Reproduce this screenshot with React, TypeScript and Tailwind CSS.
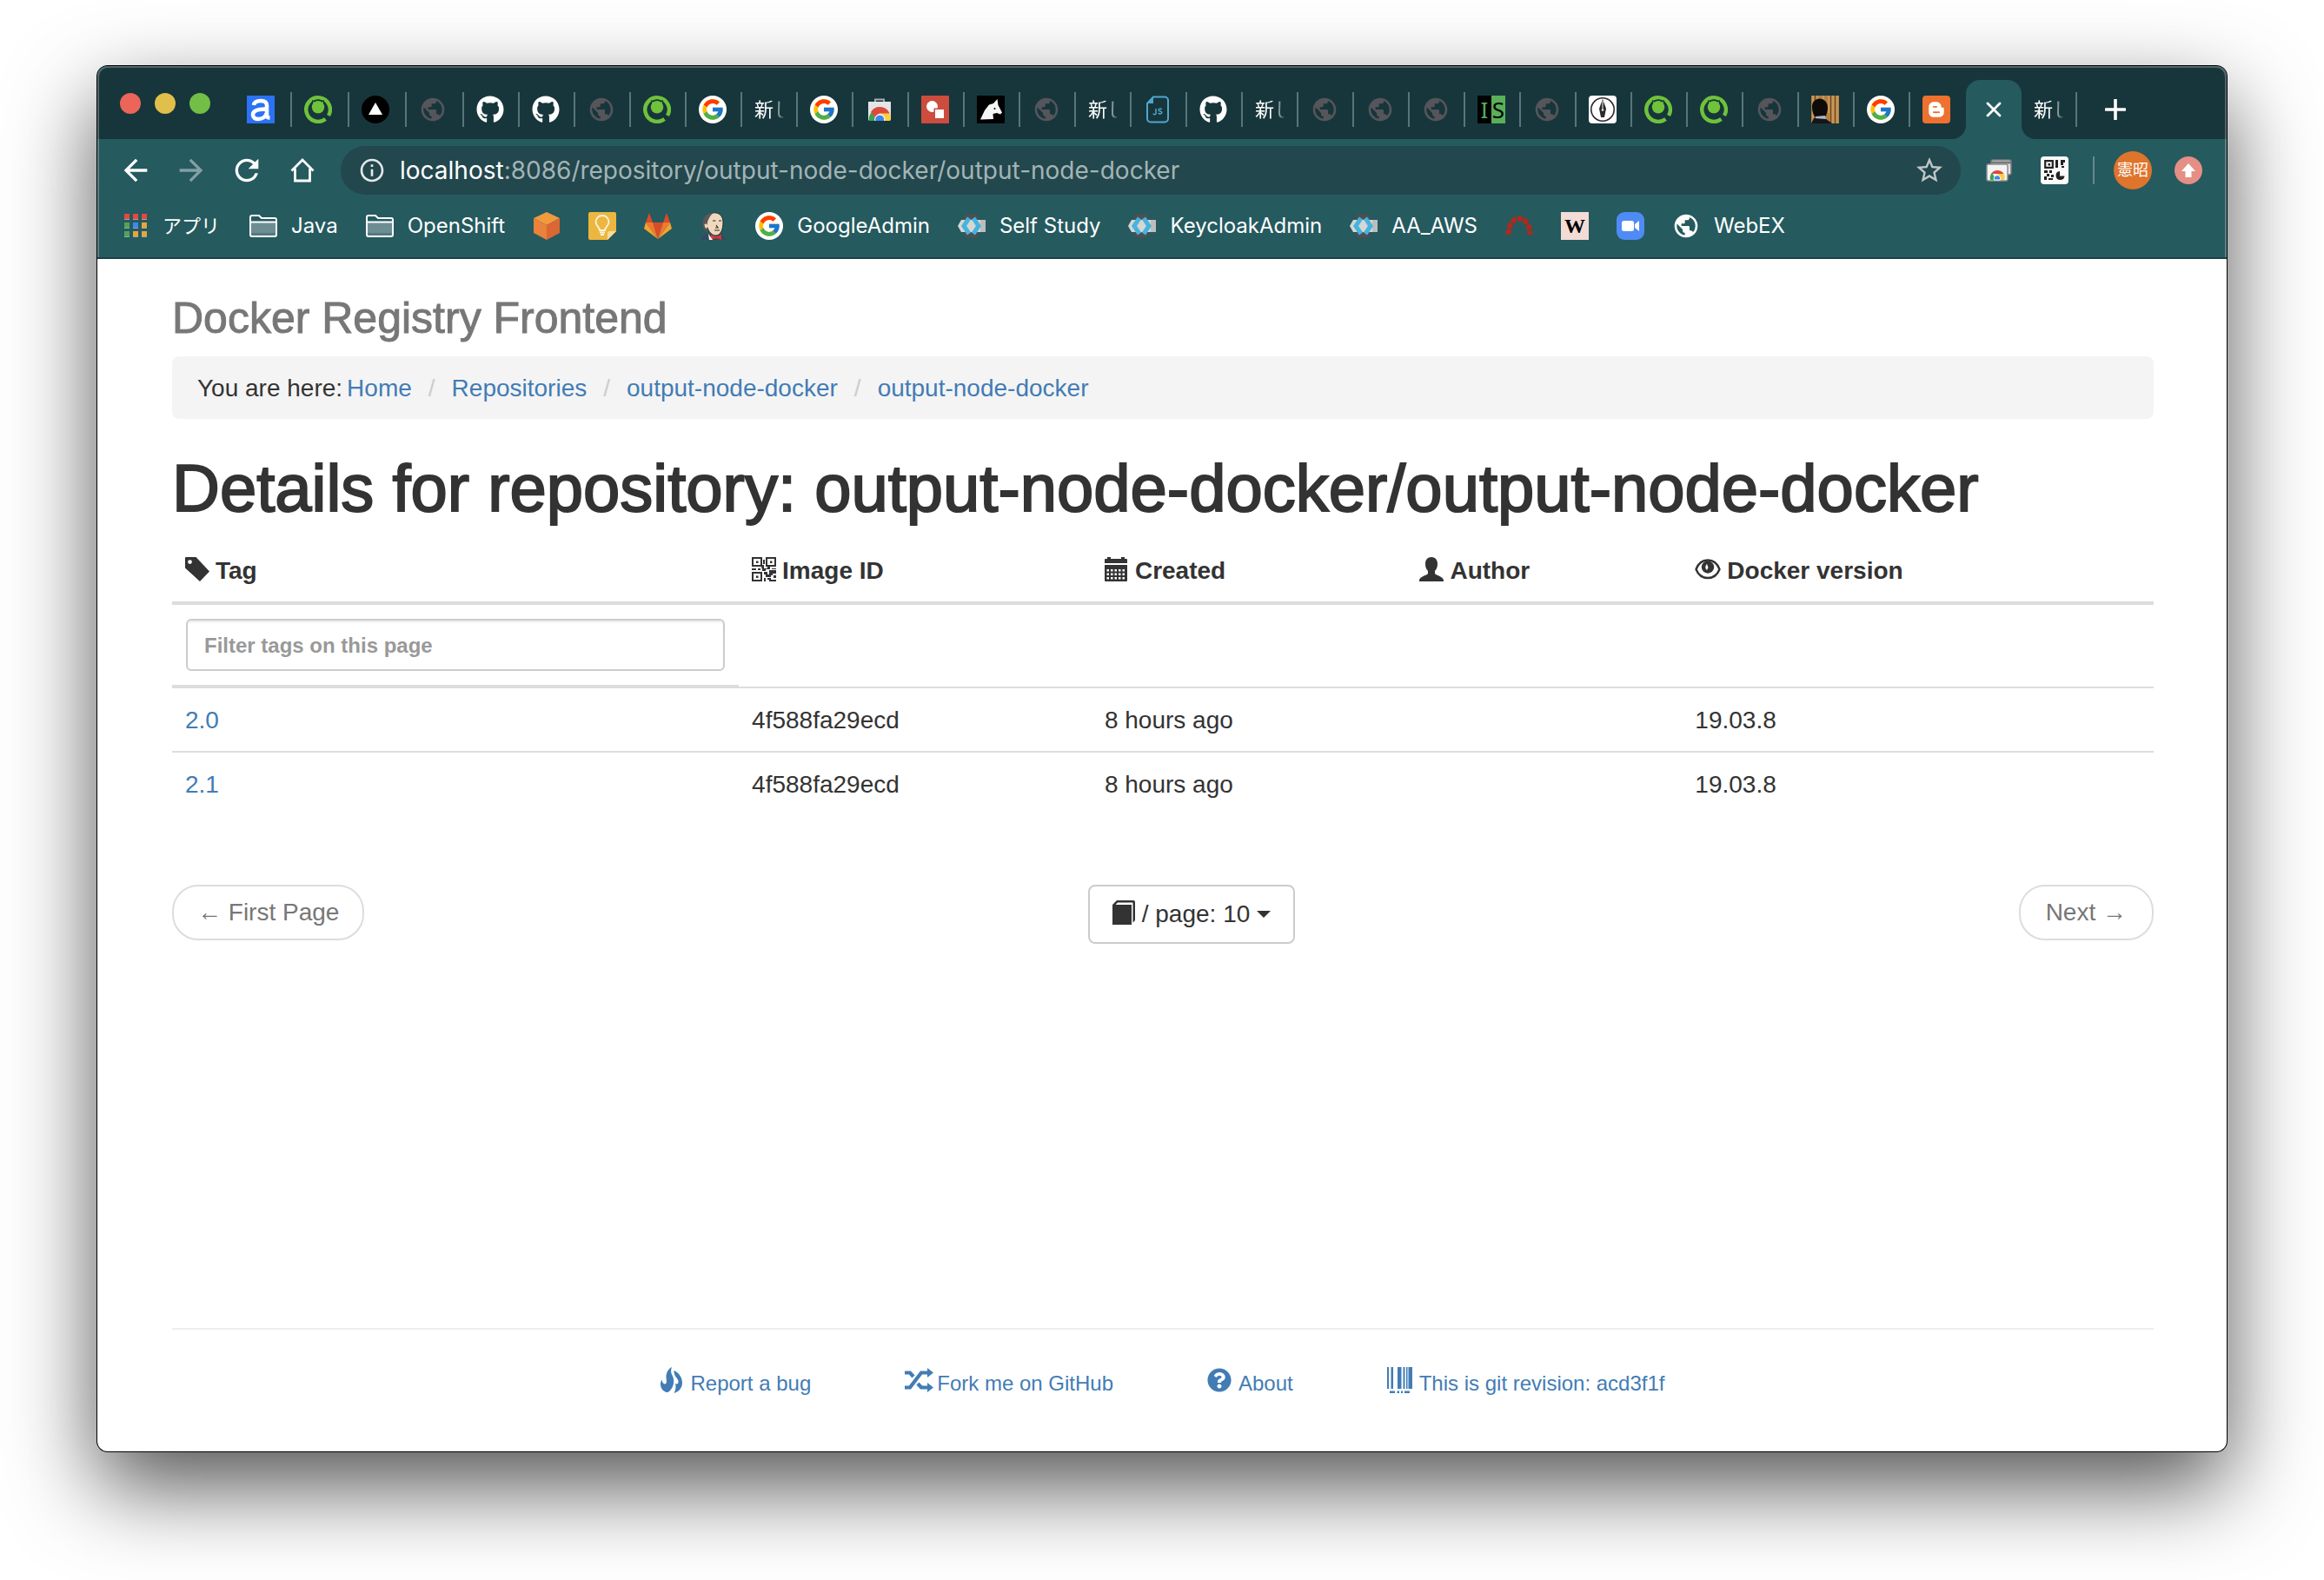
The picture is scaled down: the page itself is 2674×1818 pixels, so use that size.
import React from "react";
import {
  MdArrowBack,
  MdArrowForward,
  MdInfoOutline,
  MdPublic,
  MdRefresh,
  MdStarBorder,
} from "react-icons/md";
import { FaBloggerB, FaGithub, FaQuestionCircle } from "react-icons/fa";
import { FcGoogle } from "react-icons/fc";

/* ---------- site icons ---------- */

const Globe = () => <MdPublic className="size-8 text-[#55555b]" />;
const GitHub = () => <FaGithub className="size-8 text-white" />;

const Google = () => (
  <span className="flex size-8 items-center justify-center rounded-full bg-white">
    <FcGoogle className="size-7" />
  </span>
);

const LetterA = () => (
  <svg viewBox="0 0 32 32" className="size-8">
    <rect width="32" height="32" fill="#2b72f6" />
    <path
      d="M8 11c.5-3.500 4-5 8-5s7 1.500 7 5.500V23c0 2 1.500 2.500 3.500 2.500M22.500 15.500C15 16 7 16 7 22c0 3.500 3 5 6 5 5 0 9.500-3 9.500-7"
      fill="none"
      stroke="#fff"
      strokeWidth="4.500"
    />
  </svg>
);

const GreenCat = () => (
  <svg viewBox="0 0 32 32" className="size-8">
    <path d="M28 23A13.800 13.800 0 1 0 24.500 27" fill="none" stroke="#6fc23a" strokeWidth="4.400" />
    <path d="M23 22l6 6" stroke="#17363b" strokeWidth="2" />
    <path d="M9 5l5 2.500h4L23 5v8H9z" fill="#17363b" />
    <circle cx="16" cy="13" r="8.500" fill="#17363b" />
    <path d="M10 7l4 1.500-3.500 3zM22 7l-4 1.500 3.500 3z" fill="#6fc23a" />
    <circle cx="16" cy="13.300" r="7.200" fill="#6fc23a" />
  </svg>
);

const Triangle = () => (
  <svg viewBox="0 0 32 32" className="size-8">
    <circle cx="16" cy="16" r="16" fill="#000" />
    <path d="M16 8l8 14H8z" fill="#fff" />
  </svg>
);

const WebStore = () => (
  <svg viewBox="0 0 32 32" className="size-8">
    <path d="M11 7V4.500h10V7" fill="none" stroke="#a9aeb2" strokeWidth="2" />
    <path d="M3 7h26v20a2 2 0 0 1-2 2H5a2 2 0 0 1-2-2z" fill="#e3e5e7" />
    <path d="M4 29a12 12 0 0 1 3-10l6 10z" fill="#37a451" />
    <path d="M28 29a12 12 0 0 0-1-10H16l5 10z" fill="#fbd043" />
    <path d="M6 19a12 12 0 0 1 21.500 1.500H16l-5 5z" fill="#dc4a3d" />
    <path d="M10.500 29a6 6 0 1 1 11.500 0z" fill="#fff" />
    <path d="M11.500 29a5 5 0 1 1 9.500 0z" fill="#3f86ee" />
  </svg>
);

const RedShapes = () => (
  <svg viewBox="0 0 32 32" className="size-8">
    <rect width="32" height="32" rx="1" fill="#cc4c3e" />
    <circle cx="12.500" cy="12.500" r="6.500" fill="#fff" />
    <rect x="14.500" y="14.500" width="13" height="13" fill="#cc4c3e" />
    <rect x="16" y="16" width="10" height="10" fill="#fff" />
  </svg>
);

const Unicorn = () => (
  <svg viewBox="0 0 32 32" className="size-8">
    <rect width="32" height="32" fill="#000" />
    <path d="M4 27.500L9 17l5-6.500 5-1.500 4.500-5 1 7 4.500 8.500-2 2-4-1.500-4.500 1 .5 6z" fill="#f5f5f5" />
    <circle cx="20.500" cy="15" r="1" fill="#000" />
  </svg>
);

const JsFile = () => (
  <svg viewBox="0 0 32 32" className="size-8">
    <path
      d="M11 1.500h13a4 4 0 0 1 4 4v21a4 4 0 0 1-4 4H8a4 4 0 0 1-4-4V9z"
      fill="none"
      stroke="#51a5cf"
      strokeWidth="2"
    />
    <path d="M11 1.500V9H4z" fill="#51a5cf" />
    <path
      d="M14 15v5.500c0 1.800-3 1.800-3 0M20.500 16c-1-1.500-3.500-1-3.500.5 0 2 3.800 1 3.800 3 0 1.800-3 2-4 .5"
      fill="none"
      stroke="#51a5cf"
      strokeWidth="1.500"
    />
  </svg>
);

const InfoSplit = () => (
  <span className="flex size-8 font-['Noto_Sans'] text-[26px] leading-8">
    <span className="w-4 bg-black text-center text-[#58b058]">I</span>
    <span className="w-4 bg-[#58b058] text-center text-black">S</span>
  </span>
);

const Pen = () => (
  <svg viewBox="0 0 32 32" className="size-8">
    <rect width="32" height="32" rx="4" fill="#fff" />
    <circle cx="16" cy="16" r="13.200" fill="none" stroke="#2b2b2b" strokeWidth="1.600" />
    <path d="M16 4l4 11-2 10h-4l-2-10z" fill="#2b2b2b" />
    <path d="M16 6v9" stroke="#fff" strokeWidth="1" />
    <circle cx="16" cy="16.500" r="1.200" fill="#fff" />
  </svg>
);

const Photo = () => (
  <svg viewBox="0 0 32 32" className="size-8">
    <rect width="32" height="32" fill="#b08143" />
    <path d="M2 0v32M7 0v8M14 0v6M20 0v20M25 0v32M30 0v32" stroke="#cfa262" strokeWidth="1.400" />
    <path d="M4.500 0v26M22.500 0v32M27.500 0v32" stroke="#71461c" strokeWidth="1" />
    <path d="M1 14c-1-14 18-14 18 0 0 5-2 9-3 11H5C3 23 1 19 1 14z" fill="#0f0b0a" />
    <path d="M5 24l11-1 1 4-12 1z" fill="#a9b9d2" />
    <path d="M0 32l3-6 14 1 7 5z" fill="#15151a" />
  </svg>
);

const Blogger = () => (
  <span className="flex size-8 items-center justify-center rounded-[4px] bg-[#ee7130]">
    <FaBloggerB className="size-5 text-white" />
  </span>
);

const Keycloak = () => (
  <svg viewBox="0 0 32 32" className="size-8">
    <path d="M9 2.500h12l7 13.500-7 13.500H9L2 16z" fill="#4d4f52" />
    <path d="M4 9h28v14H4L0 16z" fill="#d6d6d6" />
    <path d="M26 9h6v14h-6z" fill="#bdbdbd" />
    <path d="M13 7l-6 9 6 9" fill="none" stroke="#45b4dd" strokeWidth="5" />
    <path d="M18 7l6 9-6 9" fill="none" stroke="#45b4dd" strokeWidth="5" />
  </svg>
);

const Apps = () => (
  <svg viewBox="0 0 26 28" className="h-7 w-[26px]">
    {[
      ["#e8473c", "#e8473c", "#e8473c"],
      ["#53a35a", "#3f86ee", "#eaa53a"],
      ["#53a35a", "#eaa53a", "#eaa53a"],
    ].map((row, r) =>
      row.map((fill, c) => (
        <g key={`${r}${c}`}>
          <rect x={c * 10} y={r * 10 + 1} width="6" height="6" fill="#8fa9ab" />
          <rect x={c * 10} y={r * 10} width="6" height="6" fill={fill} />
        </g>
      )),
    )}
  </svg>
);

const Folder = () => (
  <svg viewBox="0 0 32 26" className="h-[26px] w-8">
    <path d="M1 3a2 2 0 0 1 2-2h8l3 3h15a2 2 0 0 1 2 2v17a2 2 0 0 1-2 2H3a2 2 0 0 1-2-2z" fill="#255a5f" />
    <path d="M2 9h28v15H2z" fill="#6c8e93" />
    <path d="M2 21h28v3H2z" fill="#54797e" />
    <path
      d="M1 3a2 2 0 0 1 2-2h8l3 3h15a2 2 0 0 1 2 2v17a2 2 0 0 1-2 2H3a2 2 0 0 1-2-2zM1 8.500h30"
      fill="none"
      stroke="#fff"
      strokeWidth="2"
    />
  </svg>
);

const Cube = () => (
  <svg viewBox="0 0 32 32" className="size-8">
    <path d="M16 0l15 7-15 8L1 7z" fill="#f19a3e" />
    <path d="M1 7l15 8v17L1 24z" fill="#e9823a" />
    <path d="M31 7l-15 8v17l15-8z" fill="#dd6733" />
  </svg>
);

const Keep = () => (
  <svg viewBox="0 0 32 32" className="size-8">
    <path d="M2 0h28a2 2 0 0 1 2 2v20L22 32H2a2 2 0 0 1-2-2V2a2 2 0 0 1 2-2z" fill="#edb63f" />
    <path d="M32 22L22 32v-8a2 2 0 0 1 2-2z" fill="#f8dd96" />
    <path
      d="M13 21c0-4-4.500-5-4.500-9.500a7.500 7.500 0 0 1 15 0C23.500 16 19 17 19 21zM13 23.500h6M14 26h4"
      fill="none"
      stroke="#fbf3e0"
      strokeWidth="1.800"
    />
  </svg>
);

const GitLab = () => (
  <svg viewBox="0 0 32 32" className="size-8">
    <path d="M16 31L10 12h12z" fill="#da4b28" />
    <path d="M16 31L2 12h8zM16 31l14-19h-8z" fill="#ee7a2f" />
    <path d="M2 12L0 19l16 12zM30 12l2 7-16 12z" fill="#f3a32f" />
    <path d="M2 12L6 1l4 11zM30 12L26 1l-4 11z" fill="#da4b28" />
  </svg>
);

const Jenkins = () => (
  <svg viewBox="0 0 32 32" className="size-8">
    <path d="M1.500 32c1-5 5-6 8.500-7l7 2 7-2c3 1 5 3 5.500 7z" fill="#33495f" />
    <path d="M8 12C8 4 12 .8 17 .8S27 4 27 12s-3 15-8.500 15S8 20 8 12z" fill="#efd8bd" stroke="#2d2d2d" strokeWidth="1" />
    <path d="M16 .8C8 1 3 6 3.500 15c0 3 2 6 5.500 8 .5-4-1-6-.5-10C10 9 11 5 16 .8z" fill="#5b5658" />
    <path d="M5.500 14c2-1.500 4 0 3.500 3s-3 2.500-3.500-3z" fill="#efd8bd" />
    <path d="M15 10h3.500M22 10h3M19 15l2 3h-3M17 21h6" fill="none" stroke="#2d2d2d" strokeWidth="1.200" />
    <path d="M13 26l6 2 6-2v6l-6-2-6 2z" fill="#d33833" />
    <path d="M10 25l5 7h-4z" fill="#fff" />
  </svg>
);

const RedArc = () => (
  <svg viewBox="0 0 32 32" className="size-8">
    <path d="M3.500 26C4 14 9 7.500 16 7.500S28 14 28.500 26" fill="none" stroke="#b3281c" strokeWidth="6" strokeDasharray="6 1.500" />
  </svg>
);

const Wiki = () => (
  <span className="flex size-8 items-center justify-center bg-[#f3dcd6] font-['Liberation_Serif'] text-2xl leading-none font-bold text-black">
    W
  </span>
);

const Zoom = () => (
  <svg viewBox="0 0 32 32" className="size-8">
    <rect width="32" height="32" rx="9" fill="#4f8bf4" />
    <rect x="6" y="10" width="14" height="12" rx="2.500" fill="#fff" />
    <path d="M21 14l5-4v12l-5-4z" fill="#fff" />
  </svg>
);

const WhiteGlobe = () => <MdPublic className="size-8 text-white" />;

/* ---------- toolbar icons ---------- */

const Plus = () => (
  <svg viewBox="0 0 24 24" className="size-6">
    <path d="M12 1v22M1 12h22" stroke="currentColor" strokeWidth="3.600" strokeLinecap="round" />
  </svg>
);

const Cross = () => (
  <svg viewBox="0 0 18 18" className="size-[18px]">
    <path d="M2 2l14 14M16 2L2 16" stroke="currentColor" strokeWidth="2.800" strokeLinecap="round" />
  </svg>
);

const Home = () => (
  <svg viewBox="0 0 28 28" className="size-7">
    <path d="M1.500 14.500L14 2l12.500 12.500M5.500 12v14h17V12" fill="none" stroke="#fff" strokeWidth="2.800" />
  </svg>
);

const RemoteTabs = () => (
  <svg viewBox="0 0 32 32" className="size-8">
    <rect x="7" y="4" width="23" height="17" rx="2" fill="#dfe1e2" stroke="#77797a" strokeWidth="1.500" />
    <path d="M7 7h23" stroke="#77797a" strokeWidth="3" />
    <rect x="2" y="9" width="24" height="19" rx="2" fill="#f4f4f4" stroke="#8b8d8e" strokeWidth="1.500" />
    <path d="M6 27a8.500 8.500 0 0 1 2-8l5 8z" fill="#37a451" />
    <path d="M22 27a8.500 8.500 0 0 0-1-8h-7l3 8z" fill="#fbd043" />
    <path d="M7 20a8.500 8.500 0 0 1 14.500 0z" fill="#dc4a3d" />
    <path d="M10.500 27a3.800 3.800 0 1 1 7 0z" fill="#3f86ee" stroke="#fff" strokeWidth="1" />
  </svg>
);

const QrExtension = () => (
  <svg viewBox="0 0 32 32" className="size-8">
    <rect width="32" height="32" rx="4" fill="#fbfbfb" />
    <path d="M5.200 5.200h8.600v7.600H5.200z" fill="none" stroke="#222" strokeWidth="2.200" />
    <path d="M8.500 8h2.500v2.500H8.500zM17 4h3v9h-3zM23 4h5v3h-2v3h-3zM24 11h3v2h-3z" fill="#222" />
    <path d="M4 16h4v3H4zM10 16h3v3h-3zM7 20h3v3H7zM12 21h3v3h-3zM4 23h3v4H4zM9 25h5v2H9z" fill="#222" />
    <path d="M22 17a5 5 0 1 0 5.500 5.500H22z" fill="#222" />
  </svg>
);

const UpdateBadge = () => (
  <svg viewBox="0 0 32 32" className="size-8">
    <circle cx="16" cy="16" r="16" fill="#e58e85" />
    <path d="M16 8l8 9h-4.500v7h-7v-7H8z" fill="#fff" />
  </svg>
);

/* ---------- page icons ---------- */

const TagIcon = () => (
  <svg viewBox="0 0 28 28" className="mb-1 size-7 shrink-0" fill="currentColor">
    <path fillRule="evenodd" d="M0 1a1 1 0 0 1 1-1h11.500L28 16.500 17 28 0 12.500zM5.500 3.200a2.400 2.400 0 1 0 0 4.800 2.400 2.400 0 0 0 0-4.800z" />
  </svg>
);

const QrIcon = () => (
  <svg viewBox="0 0 28 28" className="mb-1 size-7 shrink-0" fill="currentColor">
    <path
      fillRule="evenodd"
      d="M0 0h12v11H0zM2 2v7h8V2zM16 0h12v11H16zM18 2v7h8V2zM0 17h12v11H0zM2 19v7h8v-7z"
    />
    <path d="M5 4.500h2.500V7H5zM21 4.500h2.500V7H21zM5 21.500h2.500V24H5zM13 3h2v5h-2zM12 9h2v4h4v-2h3v3h-5v2h-4v-3h-1zM0 13h5v2H0zM7 13h3v2H7zM14 17h4v3h2v-5h8v4h-4v2h-2v2h-6v-3h-2zM23 13h5v1h-5zM14 24h2v4h-2zM18 24h4v2h-4zM20 26h8v2h-8zM25 21h3v3h-3z" />
  </svg>
);

const CalendarIcon = () => (
  <svg viewBox="0 0 28 28" className="mb-1 size-7 shrink-0" fill="currentColor">
    <path d="M0 3a1 1 0 0 1 1-1h2V0h4v2h12V0h4v2h2a1 1 0 0 1 1 1v4H0z" />
    <path
      fillRule="evenodd"
      d="M0 9h26v18a1 1 0 0 1-1 1H1a1 1 0 0 1-1-1zM2.500 14v2.500H5V14zM7 14v2.500h2.500V14zM11.500 14v2.500H14V14zM16 14v2.500h2.500V14zM20.500 14v2.500H23V14zM2.500 18.500V21H5v-2.500zM7 18.500V21h2.500v-2.500zM11.500 18.500V21H14v-2.500zM16 18.500V21h2.500v-2.500zM20.500 18.500V21H23v-2.500zM2.500 23v2.500H5V23zM7 23v2.500h2.500V23zM11.500 23v2.500H14V23zM16 23v2.500h2.500V23zM20.500 23v2.500H23V23z"
    />
  </svg>
);

const UserIcon = () => (
  <svg viewBox="0 0 28 28" className="mb-1 size-7 shrink-0" fill="currentColor">
    <path d="M14 0c4.200 0 7 3 7 7.500 0 3-.5 6-3 8.500v2.500c0 1 1 1.500 2 2 3 1.200 8 3 8 6.500v1H0v-1c0-3.500 5-5.300 8-6.500 1-.5 2-1 2-2V16c-2.500-2.500-3-5.500-3-8.500C7 3 9.800 0 14 0z" />
  </svg>
);

const EyeIcon = () => (
  <svg viewBox="0 0 30 28" className="mb-1 h-7 w-[30px] shrink-0">
    <path d="M1.500 14C4 7.500 9 3.500 15 3.500S26 7.500 28.500 14C26 20.500 21 24 15 24S4 20.500 1.500 14z" fill="none" stroke="currentColor" strokeWidth="2.400" />
    <circle cx="15" cy="11.500" r="7.200" fill="currentColor" />
    <path d="M14 8c-2 2-2.500 5 0 7l1.500-3z" fill="#fff" />
  </svg>
);

const BookIcon = () => (
  <svg viewBox="0 0 26 28" className="mb-1 h-7 w-[26px] shrink-0" fill="currentColor">
    <path d="M0 5L5 0h19a2 2 0 0 1 2 2v21l-2.500 2.500V2.500H6L3.500 5H22v23H0z" />
  </svg>
);

const FireIcon = () => (
  <svg viewBox="0 0 26 30" className="mb-2 h-[30px] w-[26px] shrink-0" fill="currentColor">
    <path d="M13 0c-1.500 4-1 7 .8 10 2.500 5 2 13-4.500 18.500-1.500.8-2.500.5-3 .3C2.500 27.500 0 24 0 20c0-2 .5-4 1.500-5.500.5 3 1.500 5 3.500 5 2.500-.5 2-4 1.500-7C6 7 9 2 13 0z" />
    <path d="M15.500 4c6 2.500 9.500 8.500 9.500 14 0 6-4 10.500-9.500 12 2-4 2.500-7 1.500-11 2.500 1 3.500 0 3.500-2.500 0-3.500-5.500-6-5-12.500z" />
  </svg>
);

const ShuffleIcon = () => (
  <svg viewBox="0 0 33 30" className="mb-2 h-[30px] w-[33px] shrink-0">
    <path d="M0 6.500h6l4 4.500M15 19l4 4.500h8M0 23.500h6L19 6.500h8" fill="none" stroke="currentColor" strokeWidth="4.200" />
    <path d="M26 1l7 5.500-7 5.500zM26 18l7 5.500-7 5.500z" fill="currentColor" />
  </svg>
);

const BarcodeIcon = () => (
  <svg viewBox="0 0 29 30" className="mb-2 h-[30px] w-[29px] shrink-0" fill="currentColor">
    <path d="M0 0h2v25H0zM4.500 0h2.500v25H4.500zM12 0h4.500v25H12zM18.500 0h2v25h-2zM22 0h1.500v25H22zM24.500 0H29v25h-4.500zM3 27.500h6V30H3zM11.500 27.500H14V30h-2.500zM16 27.500h2V30h-2zM20 27.500h6V30h-6z" />
  </svg>
);

/* ---------- data ---------- */

type SiteIcon = () => React.ReactElement;

const tabs: { title: string; Icon?: SiteIcon }[] = [
  { title: "Analytics", Icon: LetterA },
  { title: "Qiita", Icon: GreenCat },
  { title: "Vercel", Icon: Triangle },
  { title: "Page", Icon: Globe },
  { title: "GitHub", Icon: GitHub },
  { title: "GitHub", Icon: GitHub },
  { title: "Page", Icon: Globe },
  { title: "Qiita", Icon: GreenCat },
  { title: "Google", Icon: Google },
  { title: "新し" },
  { title: "Google", Icon: Google },
  { title: "Web Store", Icon: WebStore },
  { title: "Shapes", Icon: RedShapes },
  { title: "Unicorn", Icon: Unicorn },
  { title: "Page", Icon: Globe },
  { title: "新し" },
  { title: "JS", Icon: JsFile },
  { title: "GitHub", Icon: GitHub },
  { title: "新し" },
  { title: "Page", Icon: Globe },
  { title: "Page", Icon: Globe },
  { title: "Page", Icon: Globe },
  { title: "IS", Icon: InfoSplit },
  { title: "Page", Icon: Globe },
  { title: "Notes", Icon: Pen },
  { title: "Qiita", Icon: GreenCat },
  { title: "Qiita", Icon: GreenCat },
  { title: "Page", Icon: Globe },
  { title: "Profile", Icon: Photo },
  { title: "Google", Icon: Google },
  { title: "Blogger", Icon: Blogger },
];

const bookmarks: { name: string; label?: string; Icon: SiteIcon }[] = [
  { name: "Java", label: "Java", Icon: Folder },
  { name: "OpenShift", label: "OpenShift", Icon: Folder },
  { name: "AWS", Icon: Cube },
  { name: "Keep", Icon: Keep },
  { name: "GitLab", Icon: GitLab },
  { name: "Jenkins", Icon: Jenkins },
  { name: "GoogleAdmin", label: "GoogleAdmin", Icon: Google },
  { name: "Self Study", label: "Self Study", Icon: Keycloak },
  { name: "KeycloakAdmin", label: "KeycloakAdmin", Icon: Keycloak },
  { name: "AA_AWS", label: "AA_AWS", Icon: Keycloak },
  { name: "Arc", Icon: RedArc },
  { name: "Wiki", Icon: Wiki },
  { name: "Zoom", Icon: Zoom },
  { name: "WebEX", label: "WebEX", Icon: WhiteGlobe },
];

const columns = [
  { label: "Tag", Icon: TagIcon },
  { label: "Image ID", Icon: QrIcon },
  { label: "Created", Icon: CalendarIcon },
  { label: "Author", Icon: UserIcon },
  { label: "Docker version", Icon: EyeIcon },
];

const images = [
  { tag: "2.0", id: "4f588fa29ecd", created: "8 hours ago", author: "", version: "19.03.8" },
  { tag: "2.1", id: "4f588fa29ecd", created: "8 hours ago", author: "", version: "19.03.8" },
];

const crumbs = ["Home", "Repositories", "output-node-docker", "output-node-docker"];

/* ---------- browser chrome ---------- */

function TabTitle({ children }: { children: string }) {
  return (
    <span className="text-[22px] leading-8 whitespace-nowrap text-white [mask-image:linear-gradient(to_right,black_50%,transparent_78%)]">
      {children}
    </span>
  );
}

function Tab({ title, Icon, wide, last }: { title: string; Icon?: SiteIcon; wide: boolean; last?: boolean }) {
  return (
    <button type="button" aria-label={title} className={`flex h-17 shrink-0 items-center pl-3.5 ${wide ? "w-[66px]" : "w-16"}`}>
      {Icon ? <Icon /> : <TabTitle>{title}</TabTitle>}
      {!last && <span className="ml-auto h-10 w-0.5 bg-[#587579]" />}
    </button>
  );
}

function TabStrip() {
  return (
    <div className="flex bg-[#17363b] pt-4 pl-[26px]">
      <div className="mt-[15px] mr-7 flex gap-4">
        <button type="button" aria-label="Close window" className="size-6 rounded-full bg-[#ec655a]" />
        <button type="button" aria-label="Minimize window" className="size-6 rounded-full bg-[#e0bf4b]" />
        <button type="button" aria-label="Zoom window" className="size-6 rounded-full bg-[#72be47]" />
      </div>
      {tabs.map((tab, i) => (
        <Tab key={i} {...tab} wide={i < 4} last={i === tabs.length - 1} />
      ))}
      <div className="relative h-17 w-16 shrink-0 rounded-t-2xl bg-[#255a5f]">
        <span className="absolute bottom-0 -left-4 size-4 bg-[#255a5f]">
          <span className="block size-4 rounded-br-2xl bg-[#17363b]" />
        </span>
        <span className="absolute -right-4 bottom-0 size-4 bg-[#255a5f]">
          <span className="block size-4 rounded-bl-2xl bg-[#17363b]" />
        </span>
        <button type="button" aria-label="Close tab" className="flex size-full items-center justify-center text-white">
          <Cross />
        </button>
      </div>
      <Tab title="新し" wide={false} />
      <button type="button" aria-label="New tab" className="flex h-17 w-[88px] items-center justify-center text-white">
        <Plus />
      </button>
    </div>
  );
}

function AddressRow() {
  return (
    <div className="flex items-center pt-2 pr-7 pl-6">
      <div className="mr-6 flex gap-6 text-white">
        <button type="button" aria-label="Back" className="flex size-10 items-center justify-center">
          <MdArrowBack className="size-10" />
        </button>
        <button type="button" aria-label="Forward" className="flex size-10 items-center justify-center text-[#84a0a3]">
          <MdArrowForward className="size-10" />
        </button>
        <button type="button" aria-label="Reload" className="flex size-10 items-center justify-center">
          <MdRefresh className="size-10" />
        </button>
        <button type="button" aria-label="Home" className="flex size-10 items-center justify-center">
          <Home />
        </button>
      </div>
      <div className="flex h-14 flex-1 items-center rounded-full bg-[#22474d] pr-[18px] pl-5 text-[#e4e8e9]">
        <MdInfoOutline className="size-8" />
        <div
          role="textbox"
          aria-label="Address"
          contentEditable
          suppressContentEditableWarning
          className="ml-4 flex-1 text-[28px] leading-10 whitespace-nowrap text-[#a3b4b6] outline-none"
        >
          <span className="text-white">localhost</span>:8086/repository/output-node-docker/output-node-docker
        </div>
        <button type="button" aria-label="Bookmark this page" className="text-[#c0c6c8]">
          <MdStarBorder className="size-9" />
        </button>
      </div>
      <button type="button" aria-label="Remote tabs" className="ml-7">
        <RemoteTabs />
      </button>
      <button type="button" aria-label="QR code" className="ml-8">
        <QrExtension />
      </button>
      <span className="ml-7 h-8 w-0.5 bg-[#66898d]" />
      <button
        type="button"
        aria-label="Profile"
        className="ml-[22px] flex size-11 items-center justify-center rounded-full bg-[#df742c] text-lg whitespace-nowrap text-white"
      >
        憲昭
      </button>
      <button type="button" aria-label="Update" className="ml-[26px]">
        <UpdateBadge />
      </button>
    </div>
  );
}

function BookmarkBar() {
  return (
    <nav aria-label="Bookmarks" className="flex h-18 items-center gap-8 pl-[31px] text-2xl leading-8 text-white">
      <a href="#apps" className="flex items-center gap-[18px] pr-0.5">
        <Apps />
        <span className="text-[22px]">アプリ</span>
      </a>
      {bookmarks.map(({ name, label, Icon }) => (
        <a key={name} href="#bookmark" aria-label={name} className="flex shrink-0 items-center gap-4 whitespace-nowrap">
          <Icon />
          {label && <span>{label}</span>}
        </a>
      ))}
    </nav>
  );
}

/* ---------- page ---------- */

function TagTable() {
  return (
    <table className="w-full table-fixed border-separate border-spacing-0 text-left">
      <colgroup>
        <col className="w-[28.6%]" />
        <col className="w-[17.8%]" />
        <col className="w-[15.9%]" />
        <col className="w-[13.9%]" />
        <col className="w-[23.8%]" />
      </colgroup>
      <thead>
        <tr>
          {columns.map(({ label, Icon }) => (
            <th key={label} scope="col" className="border-b-4 border-[#ddd] px-[15px] pt-[17px] pb-[15px] font-bold">
              <span className="flex items-center gap-[7px]">
                <Icon />
                {label}
              </span>
            </th>
          ))}
        </tr>
        <tr>
          <th className="border-b-4 border-[#ddd] p-4">
            <input
              type="text"
              aria-label="Filter tags on this page"
              placeholder="Filter tags on this page"
              className="block h-15 w-full rounded-md border-2 border-[#ccc] px-[19px] pt-0.5 text-2xl font-bold shadow-[inset_0_2px_2px_rgba(0,0,0,0.075)] outline-none placeholder:text-[#999]"
            />
          </th>
          <td colSpan={4} className="border-b-2 border-[#ddd]" />
        </tr>
      </thead>
      <tbody>
        {images.map((image, i) => {
          const cell =
            i < images.length - 1
              ? "border-b-2 border-[#ddd] px-[15px] pt-[17px] pb-[15px]"
              : "px-[15px] pt-[17px] pb-[15px]";
          return (
            <tr key={image.tag}>
              <td className={cell}>
                <a href="#tag" className="text-[#427cb5]">
                  {image.tag}
                </a>
              </td>
              <td className={cell}>{image.id}</td>
              <td className={cell}>{image.created}</td>
              <td className={cell}>{image.author}</td>
              <td className={cell}>{image.version}</td>
            </tr>
          );
        })}
      </tbody>
    </table>
  );
}

function Pager() {
  return (
    <div className="mt-20 flex items-start justify-between">
      <button type="button" className="rounded-[30px] border-2 border-[#ddd] px-[27px] py-2.5 text-[#777]">
        ← First Page
      </button>
      <button type="button" className="flex items-center rounded-lg border-2 border-[#ccc] px-[26px] py-3">
        <BookIcon />
        <span className="ml-2">/ page: 10</span>
        <span className="ml-2 border-x-8 border-t-8 border-x-transparent border-t-[#333]" />
      </button>
      <button type="button" className="rounded-[30px] border-2 border-[#ddd] px-[29px] py-2.5 text-[#777]">
        Next →
      </button>
    </div>
  );
}

function Footer() {
  return (
    <footer className="mt-auto flex justify-center gap-[108px] border-t-2 border-[#eee] pt-[43px] pb-[59px] text-2xl leading-[34px] text-[#427cb5]">
      <a href="#bug" className="flex items-center gap-2">
        <FireIcon />
        Report a bug
      </a>
      <a href="#fork" className="flex items-center gap-1">
        <ShuffleIcon />
        Fork me on GitHub
      </a>
      <a href="#about" className="flex items-center gap-2">
        <FaQuestionCircle className="mb-2 size-7" />
        About
      </a>
      <a href="#revision" className="flex items-center gap-2">
        <BarcodeIcon />
        This is git revision: acd3f1f
      </a>
    </footer>
  );
}

export default function App() {
  return (
    <div className="flex min-h-screen bg-white px-28 pt-19 pb-37">
      <div className="flex min-w-0 flex-1 flex-col overflow-hidden rounded-xl bg-white shadow-[0_0_0_1px_#000,0_40px_100px_rgba(0,0,0,0.68)]">
        <header className="relative border-b-2 border-[#1b4046] bg-[#255a5f] font-['Inter','Noto_Sans_CJK_JP',sans-serif]">
          <TabStrip />
          <AddressRow />
          <BookmarkBar />
          <span className="pointer-events-none absolute inset-0 rounded-t-xl border-x-2 border-t-2 border-white/25" />
        </header>
        <main className="flex flex-1 flex-col pt-[42px] pr-21 pl-[86px] font-['Liberation_Sans',Arial,sans-serif] text-[28px] leading-10 text-[#333]">
          <h3 className="mb-[17px] text-[50px] leading-[53px] text-[#777] [-webkit-text-stroke:1px_#777]">
            Docker Registry Frontend
          </h3>
          <ol className="flex rounded-lg bg-[#f4f4f4] px-[29px] pt-[17px] pb-[15px]">
            <li className="mr-[5px]">You are here:</li>
            {crumbs.map((crumb, i) => (
              <li key={i} className="flex">
                {i > 0 && <span className="px-[19px] text-[#ccc]">/</span>}
                <a href="#crumb" className="text-[#427cb5]">
                  {crumb}
                </a>
              </li>
            ))}
          </ol>
          <h1 className="mt-10 mb-[19px] text-[76px] leading-[79px] [-webkit-text-stroke:2px_#333]">
            Details for repository: output-node-docker/output-node-docker
          </h1>
          <TagTable />
          <Pager />
          <Footer />
        </main>
      </div>
    </div>
  );
}
